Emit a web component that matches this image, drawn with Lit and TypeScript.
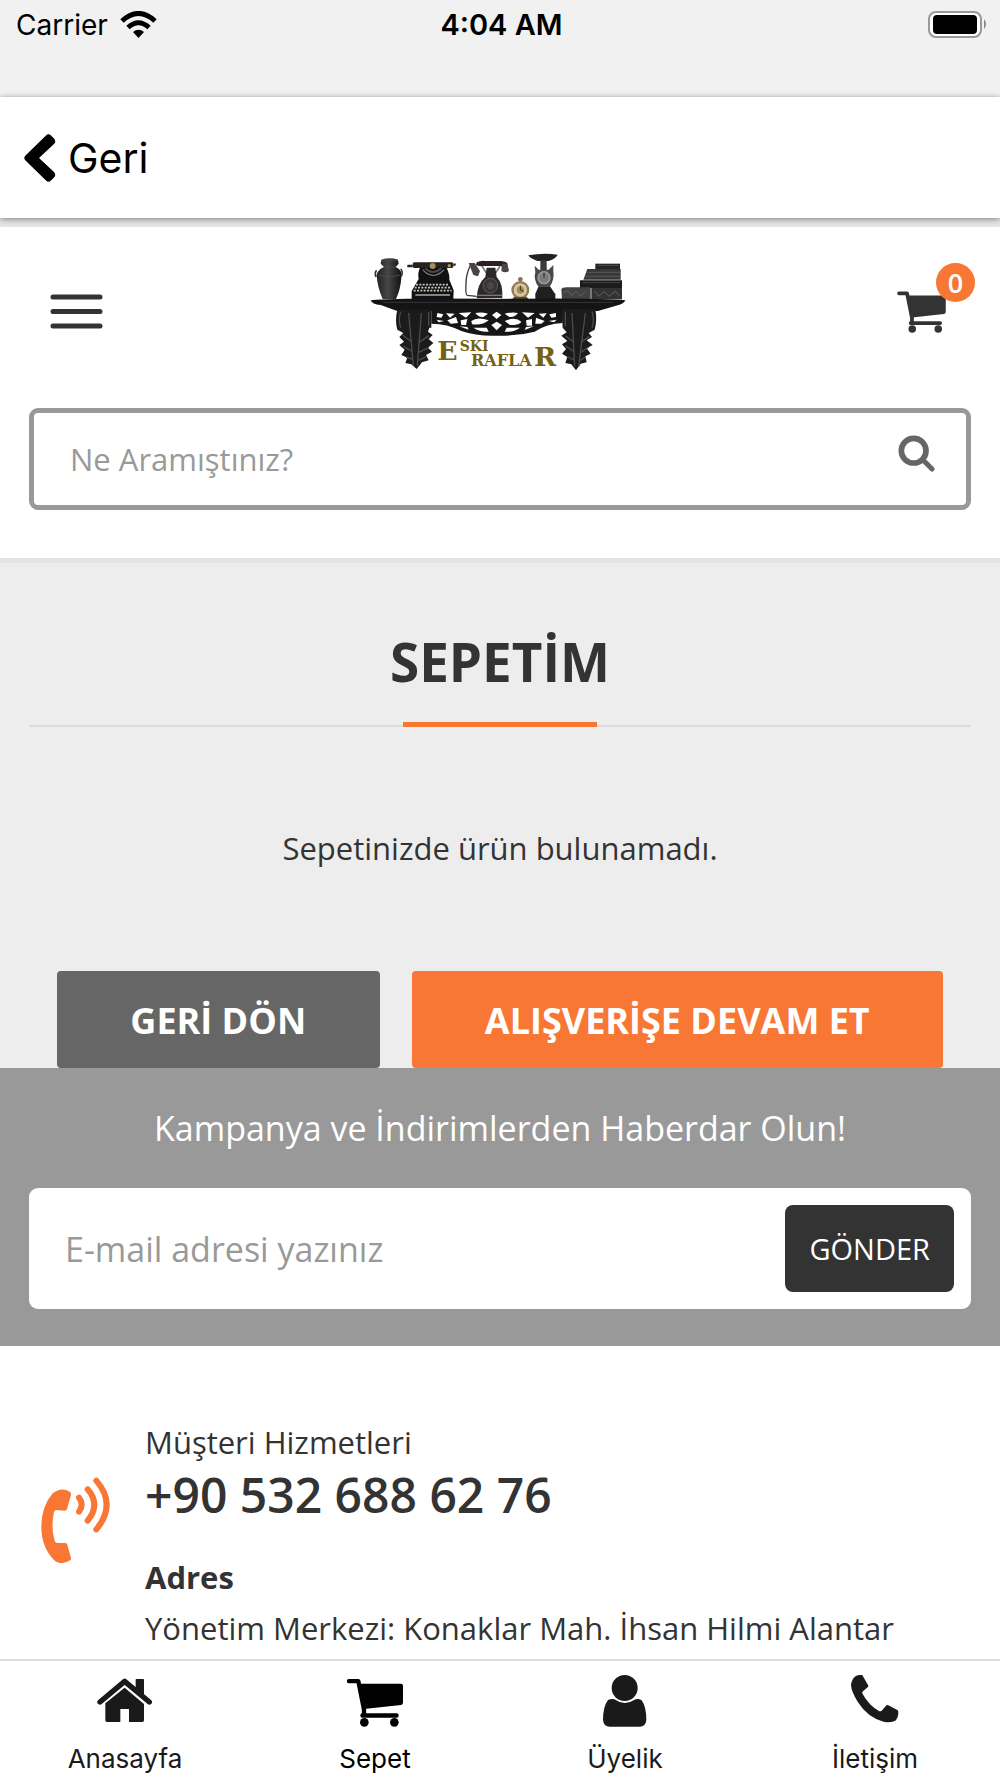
import { LitElement, html, css, svg } from "lit";
import { customElement, property } from "lit/decorators.js";

const cartShape = svg`
  <path d="M6 18.500H34L51 104V118" fill="none" stroke="currentColor" stroke-width="13" stroke-linecap="round" stroke-linejoin="round"/>
  <path d="M33 26H162Q168 26 168 32V83Q168 89 162 90L51 102Z" fill="currentColor"/>
  <rect x="40" y="115" width="115" height="13" rx="6" fill="currentColor"/>
  <circle cx="52" cy="142" r="13" fill="currentColor"/>
  <circle cx="142" cy="142" r="13" fill="currentColor"/>`;

const tabShapes: Record<string, unknown> = {
  home: svg`
    <path d="M9 81L83 19L157 81" fill="none" stroke="currentColor" stroke-width="16" stroke-linejoin="round" stroke-linecap="round"/>
    <path d="M116 14Q116 12 118 12H139Q141 12 141 14V68L116 46Z" fill="currentColor"/>
    <path d="M25 85L83 38L141 87V136Q141 141 136 141H96V102H70V141H30Q25 141 25 136Z" fill="currentColor"/>`,
  cart: cartShape,
  user: svg`
    <circle cx="83" cy="39" r="39" fill="currentColor"/>
    <path d="M33 75Q44 70 52 73Q83 95 116 73Q124 70 134 76Q148 95 148 135Q146 155 128 155H38Q20 155 18 135Q18 95 33 75Z" fill="currentColor"/>`,
  phone: svg`
    <path d="M28 2Q38 -1 44 0Q46 0 47 2L63 30Q65 34 62 37L48 49Q44 53 47 57Q66 92 96 108Q101 110 104 107L117 92Q120 89 124 91L151 105Q154 107 154 111Q154 128 145 137Q130 143 112 141Q62 128 32 80Q13 50 12 30Q14 10 28 2Z" fill="currentColor"/>`,
};

@customElement("tab-link")
export class TabLink extends LitElement {
  @property() icon = "home";
  @property() label = "";
  @property({ type: Boolean }) active = false;

  static styles = css`
    :host { display: block; flex: 1 1 0; }
    .tab {
      display: flex; flex-direction: column; align-items: center; gap: 16px;
      padding-top: 14px; color: #1a1a1a; text-decoration: none;
      font: 400 26px/32px Inter, Roboto, sans-serif;
    }
    .current { color: #000; }
    .icon { width: 56px; height: 52px; display: block; }
  `;

  render() {
    return html`<a class="tab ${this.active ? "current" : ""}" href="#">
      <svg class="icon" viewBox="0 0 168 156" aria-hidden="true">${tabShapes[this.icon]}</svg>
      <span>${this.label}</span>
    </a>`;
  }
}

@customElement("shop-logo")
export class ShopLogo extends LitElement {
  static styles = css`
    :host { display: block; }
    .art { display: block; width: 256px; height: 118px; }
    .name { font-family: "DejaVu Serif", serif; font-weight: 700; fill: #75610f; }
  `;

  render() {
    return html`<svg class="art" viewBox="30 38 768 354" role="img" aria-label="Eski Raflar">
      <defs>
        <linearGradient id="vase"><stop offset="0" stop-color="#222"/><stop offset=".45" stop-color="#484646"/><stop offset="1" stop-color="#111"/></linearGradient>
      </defs>
      <path d="M64 58Q88 50 114 58L116 70L107 80Q128 88 124 112Q122 145 108 176H68Q52 140 50 105Q52 88 72 80L62 70Z" fill="url(#vase)"/>
      <path d="M50 90Q43 96 48 110M122 86Q130 94 124 108" fill="none" stroke="#333" stroke-width="5"/>
      <path d="M66 60H112M72 80H106M56 104Q88 114 120 104" stroke="#4a4848" stroke-width="3" fill="none"/>
      <g>
        <rect x="158" y="66" width="122" height="17" rx="5" fill="#26231f"/>
        <path d="M142 77H158M280 73H287" stroke="#222" stroke-width="7"/>
        <path d="M180 82L260 82Q270 104 268 118L281 150L280 176H155V152L176 116Q172 98 180 82Z" fill="#111"/>
        <path d="M188 88Q218 122 252 88" fill="none" stroke="#777" stroke-width="4"/>
        <path d="M196 84Q218 106 244 84" fill="none" stroke="#4a4a4a" stroke-width="6"/>
        <circle cx="218" cy="77" r="9" fill="#a78d5a"/><circle cx="268" cy="76" r="5" fill="#b09558"/>
        <path d="M168 133H268M164 142H272M161 151H275" stroke="#c9c4b8" stroke-width="5" stroke-dasharray="6 4"/>
        <path d="M166 164H270" stroke="#aaa" stroke-width="5"/>
      </g>
      <g>
        <path d="M332 74Q318 100 318 130Q316 164 322 165L350 168" fill="none" stroke="#3a3436" stroke-width="4"/>
        <path d="M326 68H344L360 92L354 108L340 104Z" fill="#4a4446"/>
        <path d="M350 66Q364 60 374 62L424 62Q436 64 442 68V77Q430 80 420 77L374 77Q360 80 348 74Z" fill="#2c2021"/>
        <path d="M426 70H442L447 92Q436 100 424 92Z" fill="#4a4446"/>
        <path d="M366 78L378 96H408L420 78" fill="none" stroke="#807c7c" stroke-width="5"/>
        <path d="M380 82H406L410 110Q430 130 427 174H350Q352 130 376 110Z" fill="#2b2829"/>
        <circle cx="391" cy="136" r="22" fill="#393638" stroke="#5d5757" stroke-width="3"/>
        <circle cx="391" cy="136" r="10" fill="#4c4848"/>
        <path d="M352 165H426" stroke="#7d7777" stroke-width="4"/>
      </g>
      <g>
        <circle cx="481" cy="117" r="7" fill="#8a744c"/>
        <circle cx="481" cy="149" r="27" fill="#8d7a57"/><circle cx="481" cy="149" r="20" fill="#d9c69c"/>
        <circle cx="481" cy="149" r="11" fill="#a28c5e"/><path d="M481 149V136M481 149L491 153" stroke="#40331f" stroke-width="3"/>
        <path d="M462 170L456 177H506L500 170Z" fill="#54472f"/>
      </g>
      <g>
        <path d="M505 45Q550 36 593 43Q588 54 566 62H532Q510 54 505 45Z" fill="#222"/>
        <path d="M541 60H560V90H541Z" fill="#3b3b3b"/>
        <path d="M524 76L536 88H566L580 74V92Q584 116 570 138H534Q520 116 526 96Z" fill="#4a4a4a"/>
        <circle cx="552" cy="112" r="20" fill="#999"/><circle cx="552" cy="112" r="15" fill="#7b7b7b"/>
        <path d="M552 112V97" stroke="#222" stroke-width="3"/>
        <path d="M536 138H570L586 162V177H526V160Z" fill="#1f1f1f"/>
      </g>
      <g>
        <path d="M706 70H780V87H706Z" fill="#242424"/><path d="M712 75H778" stroke="#666" stroke-width="2"/>
        <path d="M682 86H782V118H670Z" fill="#383838"/><path d="M680 96H780M676 108H780" stroke="#5a5a5a" stroke-width="3"/>
        <path d="M660 120H786V143H660Z" fill="#1b1b1b"/><path d="M668 127H782" stroke="#555" stroke-width="2"/>
        <path d="M604 147Q606 141 620 141H692V177H606Z" fill="#424242"/><path d="M694 143H786V177H694Z" fill="#333"/>
        <path d="M612 158L624 150L634 166L648 152L660 168L676 154M704 152L716 168L732 154L748 168L766 152L778 166" fill="none" stroke="#606060" stroke-width="3"/>
      </g>
      <path d="M32 180Q120 172 414 176Q700 172 796 180Q792 192 768 196L714 212H112L62 194Q36 192 32 180Z" fill="#141414"/>
      <path d="M70 186H758" stroke="#353535" stroke-width="3"/>
      <path d="M214 208H608V248Q560 250 524 274Q470 288 410 286Q350 288 304 272Q262 250 214 250Z" fill="#161616"/>
      <g fill="#fff">
        <path d="M232 218L250 222L244 232L230 230Z"/><path d="M258 219L284 220L270 232Z"/><path d="M296 218L334 216L318 232Z"/>
        <path d="M230 238L252 242L236 246Z"/><path d="M262 240L288 230L294 248L272 250Z"/><path d="M302 240L322 236L318 254L304 254Z"/>
        <path d="M346 218Q364 214 384 220L370 230Q356 232 346 218Z"/><path d="M334 242Q352 228 386 240Q368 256 336 252Z"/>
        <path d="M396 224L410 214L424 224L410 236Z"/><path d="M394 254L410 244L426 254L410 270Z"/>
        <path d="M434 220Q454 214 474 218Q464 232 448 230Z"/><path d="M434 242Q466 228 484 244Q480 254 450 254Z"/>
        <path d="M486 216L524 218L504 232Z"/><path d="M536 220L560 219L550 232Z"/><path d="M568 222L588 218V230L574 232Z"/>
        <path d="M498 240L516 236L516 256L500 256Z"/><path d="M528 232L554 242L544 250L526 250Z"/><path d="M566 242L590 238L582 246Z"/>
        <path d="M340 262L380 262L386 274Q360 276 340 262Z"/><path d="M440 262L480 262Q460 276 434 274Z"/><path d="M298 258L322 260L326 268Z"/><path d="M498 260L522 258L494 269Z"/>
      </g>
      <path d="M112 208H214V262H208L204 274L218 284L206 296L220 308L204 322L216 334L198 344L206 360L186 366L170 386L154 372L136 368L142 352L124 344L134 328L118 314L132 304L118 290L130 278L112 268Q104 240 112 208Z" fill="#1b1b1b"/>
      <path d="M122 214Q114 240 122 262M206 216V256M146 218L160 376M184 218L172 376M128 284L156 306M206 286L178 306M130 318L158 334M206 322L176 336M138 350L160 358M200 348L176 360" fill="none" stroke="#4b4b4b" stroke-width="4"/>
      <path d="M605 206H706Q712 240 704 268L686 278L696 290L680 300L698 314L680 324L692 340L676 348L680 366L662 370L648 390L634 372L616 368L622 350L606 340L618 326L606 312L622 302L604 286L620 276L608 262Z" fill="#1b1b1b"/>
      <path d="M616 214V258M696 214Q704 240 696 262M636 218L644 378M676 218L656 378M616 286L642 306M688 288L662 306M616 316L642 334M686 320L662 336M624 350L644 360M676 350L658 362" fill="none" stroke="#4b4b4b" stroke-width="4"/>
      <text class="name" x="232" y="358" font-size="80">E</text>
      <text class="name" x="299" y="332" font-size="42">SKI</text>
      <text class="name" x="333" y="377" font-size="48">RAFLA</text>
      <text class="name" x="522" y="377" font-size="80">R</text>
    </svg>`;
  }
}

@customElement("app-root")
export class AppRoot extends LitElement {
  static styles = css`
    :host {
      display: flex; flex-direction: column; height: 100vh; overflow: hidden;
      background: #fff; color: #333;
      font: 400 31px/44px "Open Sans", "Noto Sans", sans-serif;
    }
    * { box-sizing: border-box; }
    h1, p { margin: 0; }
    svg { display: block; }
    button { border: 0; cursor: pointer; font-family: inherit; }
    input { border: 0; outline: 0; background: none; font-family: inherit; color: #333; min-width: 0; }
    input::placeholder { color: #999; opacity: 1; }

    .status {
      display: grid; grid-template-columns: 1fr auto 1fr; align-items: start;
      height: 97px; padding: 8px 13px 0 16px; background: #f1f1f1; color: #000;
      font: 400 28px/34px Inter, sans-serif;
    }
    .carrier { display: flex; align-items: center; gap: 12px; }
    .clock { font-weight: 600; font-size: 29px; }
    .battery { justify-self: end; }

    .backbar {
      position: relative; display: flex; align-items: center;
      height: 121px; padding-left: 24px; background: #fff;
      box-shadow: 0 1px 6px rgba(0, 0, 0, 0.45);
    }
    .back {
      display: flex; align-items: center; gap: 12px; padding: 0;
      background: none; color: #000; font: 400 41px/52px Inter, sans-serif;
    }

    .page { flex: 1 1 0; min-height: 0; overflow: hidden; }
    .head {
      border-top: 9px solid #e5e5e5; border-bottom: 5px solid #e4e4e4;
      padding: 26px 29px 48px;
    }
    .brandrow {
      display: grid; grid-template-columns: 1fr auto 1fr; align-items: center;
      height: 118px; padding: 0 25px 0 21px;
    }
    .menu { justify-self: start; padding: 0 0 2px; background: none; color: #333; }
    .basket { position: relative; justify-self: end; padding-bottom: 4px; color: #333; }
    .count {
      position: absolute; left: 39px; top: -25px; width: 39px; height: 39px;
      border-radius: 50%; background: #f97734; color: #fff;
      font-size: 27px; font-weight: 600; line-height: 39px; text-align: center;
    }
    .search {
      display: flex; align-items: center; height: 102px; margin-top: 37px;
      padding: 0 31px 0 36px; border: 5px solid #999; border-radius: 9px;
    }
    .search input { flex: 1; font-size: 31px; line-height: 44px; padding: 0; }
    .find { padding: 0 0 12px; background: none; color: #666; }

    .cart { background: #ededed; padding: 0 29px; text-align: center; }
    .title {
      padding: 63px 0 27px; border-bottom: 2px solid #dcdcdc;
      font-size: 53px; line-height: 72px; font-weight: 700;
    }
    .accent { width: 194px; height: 5px; margin: -5px auto 0; background: #f97734; position: relative; }
    .empty { padding: 99px 0 101px; }
    .actions { display: flex; gap: 32px; padding: 0 28px; }
    .action {
      flex: 1 1 auto; height: 97px; padding: 2px 28px 0; border-radius: 4px;
      color: #fff; font-size: 36px; line-height: 48px; font-weight: 700;
    }
    .grey { background: #666; }
    .orange { background: #f97734; }

    .news { background: #999; padding: 36px 29px 37px; text-align: center; color: #fff; }
    .lead { font-size: 34px; line-height: 48px; }
    .signup {
      display: flex; align-items: center; height: 121px; margin-top: 36px;
      padding: 0 17px 0 36px; border-radius: 9px; background: #fff;
    }
    .signup input { flex: 1; font-size: 34px; line-height: 48px; padding: 0; }
    .send {
      height: 87px; padding: 0 24px; border-radius: 8px;
      background: #333; color: #fff; font-size: 29px; line-height: 40px;
    }

    .contact { display: flex; gap: 33px; padding: 74px 29px 0 40px; }
    .call { flex: none; margin-top: 56px; color: #f97734; }
    .phone { display: block; color: inherit; text-decoration: none; font-size: 48px; line-height: 62px; font-weight: 600; }
    .heading { margin-top: 29px; font-weight: 700; }
    .address { margin-top: 7px; }

    .tabs { display: flex; height: 119px; background: #fff; border-top: 2px solid #dcdcdc; }
  `;

  render() {
    return html`
      <div class="status">
        <div class="carrier">
          <span>Carrier</span>
          <svg width="37" height="29" viewBox="0 0 37 29" aria-hidden="true">
            <g fill="none" stroke="#000" stroke-width="5">
              <path d="M2 10Q18.500 -5 35 10"/><path d="M8 16.500Q18.500 7 29 16.500"/>
            </g>
            <path d="M13 21Q18.500 16.500 24 21L18.500 27Z"/>
          </svg>
        </div>
        <div class="clock">4:04 AM</div>
        <svg class="battery" width="59" height="32" viewBox="0 0 59 32" role="img" aria-label="Battery">
          <rect x="1" y="4" width="52" height="25" rx="7" fill="#fff" stroke="#999" stroke-width="2"/>
          <rect x="5" y="7" width="44" height="19" rx="4"/>
          <path d="M56 11Q60 16 56 21Z" fill="#888"/>
        </svg>
      </div>

      <div class="backbar">
        <button class="back">
          <svg width="32" height="48" viewBox="0 0 32 48" aria-hidden="true">
            <path d="M22 1.500Q24.500 -1 27 1.500L30 4.500Q32.500 7.500 30 10L15 24L30 38Q32.500 41 30 43.500L27 46.500Q24.500 49 22 46.500L1.500 26.500Q-1 24 1.500 21.500Z"/>
          </svg>
          <span>Geri</span>
        </button>
      </div>

      <main class="page">
        <header class="head">
          <div class="brandrow">
            <button class="menu" aria-label="Menü">
              <svg width="53" height="35" viewBox="0 0 53 35">
                <path d="M3 3H50M3 17.500H50M3 32H50" stroke="currentColor" stroke-width="5" stroke-linecap="round"/>
              </svg>
            </button>
            <shop-logo></shop-logo>
            <a class="basket" href="#" aria-label="Sepet">
              <svg width="49" height="45" viewBox="0 0 168 156">${cartShape}</svg>
              <span class="count">0</span>
            </a>
          </div>
          <form class="search">
            <input type="search" placeholder="Ne Aramıştınız?" aria-label="Ne Aramıştınız?" />
            <button class="find" type="button" aria-label="Ara">
              <svg width="37" height="37" viewBox="0 0 111 111">
                <circle cx="47" cy="47" r="37" fill="none" stroke="currentColor" stroke-width="17"/>
                <path d="M76 76L102 102" stroke="currentColor" stroke-width="15" stroke-linecap="round"/>
              </svg>
            </button>
          </form>
        </header>

        <section class="cart">
          <h1 class="title">SEPETİM</h1>
          <div class="accent"></div>
          <p class="empty">Sepetinizde ürün bulunamadı.</p>
          <div class="actions">
            <button class="action grey">GERİ DÖN</button>
            <button class="action orange">ALIŞVERİŞE DEVAM ET</button>
          </div>
        </section>

        <section class="news">
          <p class="lead">Kampanya ve İndirimlerden Haberdar Olun!</p>
          <form class="signup">
            <input type="email" placeholder="E-mail adresi yazınız" aria-label="E-mail adresi yazınız" />
            <button class="send" type="button">GÖNDER</button>
          </form>
        </section>

        <section class="contact">
          <svg class="call" width="72" height="88" viewBox="60 46 216 264" aria-hidden="true">
            <path d="M153 102L141 145Q139 151 133 150L109 148Q104 148 102 154Q92 200 104 240Q106 247 112 247L136 247Q141 247 142 252L153 292Q154 296 150 299Q128 315 106 302Q64 262 64 198Q64 138 98 98Q124 78 149 93Q155 96 153 102Z" fill="currentColor"/>
            <path d="M177 111Q193 131 177 153M203 86Q243 132 203 180M229 60Q291 132 229 206" fill="none" stroke="currentColor" stroke-width="18" stroke-linecap="round"/>
          </svg>
          <div>
            <p>Müşteri Hizmetleri</p>
            <a class="phone" href="tel:+905326886276">+90 532 688 62 76</a>
            <p class="heading">Adres</p>
            <p class="address">Yönetim Merkezi: Konaklar Mah. İhsan Hilmi Alantar</p>
          </div>
        </section>
      </main>

      <nav class="tabs">
        <tab-link icon="home" label="Anasayfa"></tab-link>
        <tab-link icon="cart" label="Sepet" active></tab-link>
        <tab-link icon="user" label="Üyelik"></tab-link>
        <tab-link icon="phone" label="İletişim"></tab-link>
      </nav>
    `;
  }
}
